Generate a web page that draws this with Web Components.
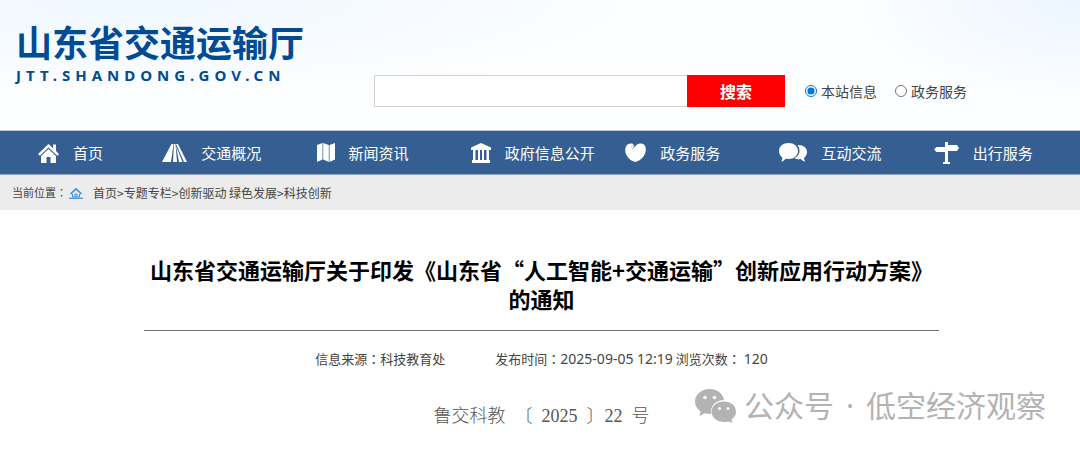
<!DOCTYPE html>
<html lang="zh-CN">
<head>
<meta charset="utf-8">
<title>山东省交通运输厅</title>
<style>
body { margin: 0; background: #fff; color: #444; font-family: "Noto Sans CJK SC", sans-serif; font-size: 14px; }
</style>
</head>
<body>
<site-header>
  <site-logo slot="logo">山东省交通运输厅<span slot="domain">JTT.SHANDONG.GOV.CN</span></site-logo>
  <site-search></site-search>
</site-header>
<site-nav>
  <nav-item icon="home">首页</nav-item>
  <nav-item icon="road">交通概况</nav-item>
  <nav-item icon="map">新闻资讯</nav-item>
  <nav-item icon="hall">政府信息公开</nav-item>
  <nav-item icon="heart">政务服务</nav-item>
  <nav-item icon="chat">互动交流</nav-item>
  <nav-item icon="sign">出行服务</nav-item>
</site-nav>
<crumb-trail></crumb-trail>
<notice-article>
  <span slot="title">山东省交通运输厅关于印发《山东省“人工智能+交通运输”创新应用行动方案》的通知</span>
  <notice-meta slot="meta"></notice-meta>
  <doc-number slot="number">鲁交科教  〔  2025  〕22  号</doc-number>
  <account-mark slot="mark"><span>公众号</span> <span>·</span> <span>低空经济观察</span></account-mark>
</notice-article>

<script>
const define = (name, html) => customElements.define(name, class extends HTMLElement {
  constructor() {
    super();
    this.attachShadow({ mode: 'open' }).innerHTML = html;
  }
});

define('site-header', `
<style>
:host { display: grid; grid-template-columns: 21fr 40fr; align-items: end; padding: 16px 24px 23px 16px;
  background: radial-gradient(ellipse 22% 80% at 100% 0%, #ecf5ff, #f3f9ff00),
    radial-gradient(ellipse 50% 75% at 12% 0%, #eff7ff, #f6faff00), #fdfeff; }
</style>
<slot name="logo"></slot><slot></slot>`);

define('site-logo', `
<style>
:host { display: block; align-self: start; padding-bottom: 23px; color: #004b93; font-weight: 700; }
div { font-size: 36px; line-height: 50px; white-space: nowrap; }
p { margin: 0; font: 700 15px/18px "Noto Sans", sans-serif; letter-spacing: 5px; }
</style>
<div><slot></slot></div><p><slot name="domain"></slot></p>`);

define('site-search', `
<style>
:host { display: block; }
form { display: flex; align-items: center; }
.box { flex: 1; max-width: 313px; min-width: 80px; height: 32px; box-sizing: border-box; border: 1px solid #d0d1d3; border-right: 0; background: #fff; padding: 0 8px; font: inherit; }
button { width: 98px; height: 32px; padding: 0; border: 0; background: #f00; color: #fff; font: 700 16px/32px "Noto Sans CJK SC", sans-serif; }
label { display: flex; align-items: center; gap: 4px; margin-left: 20px; font-size: 14px; line-height: 20px; white-space: nowrap; }
label + label { margin-left: 18px; }
label input { width: 12px; height: 12px; margin: 0; accent-color: #0078d7; }
</style>
<form>
  <input class="box" type="text" aria-label="搜索">
  <button type="button">搜索</button>
  <label><input type="radio" name="scope" checked>本站信息</label>
  <label><input type="radio" name="scope">政务服务</label>
</form>`);

define('site-nav', `
<style>
:host { display: block; background: #355f92; border-top: 1px solid #b5c8dc; border-bottom: 1px solid #8fa6c6; }
nav { display: grid; grid-template-columns: repeat(7, 1fr); }
::slotted(:first-child) { padding-left: 38px; }
</style>
<nav><slot></slot></nav>`);

const icons = {
  home: [21, 20, '<path d="M10.500 1 0 11l1.800 1.700L10.500 4.500l8.700 8.200L21 11l-3-2.900V1.500h-3v3.700z"/><path d="M10.500 6 3 13v7h5.500v-6h4v6H18v-7z"/>'],
  road: [25, 18, '<path d="M9.500 0h2L9 18H0z"/><path d="M12 0h1.500L15 18h-4z"/><path d="M14 0h2l9 18h-3z"/><path d="M14 2l6.500 16H17z"/>'],
  map: [18, 19, '<path d="M0 2 5.500 0v16.500L0 19zM6.200 0 11.800 2v17l-5.600-2.500zM12.500 2l5.500-2v16.500L12.500 19z"/>'],
  hall: [20, 20, '<path d="M10 0 20 4.500V7H0V4.500z"/><path d="M2 7h2.500v10H2zm5 0h2v10H7zm4 0h2v10h-2zm4.500 0H18v10h-2.500zM1 17h18v3H1z"/>'],
  heart: [21, 19, '<path d="M6 5.500C6.500 3 7.500 1.500 9.500 2.500L7 6.500 11.500 2C14 0 17 0 19 1.500c3 3 2 9-1 12.500-2 2.500-5 4.500-7.500 5C7 18.500 4 16 2 13-.5 9-.5 4 2.500 1.500 4.500 0 7.500 0 9 1.500 7 2 6 3.500 6 5.500z"/>'],
  chat: [28, 19, '<path d="M9.500 0C15 0 19 3.500 19 8s-4 8-9.500 8c-1 0-2 0-3-.3C5.500 17 4 18.500 2 18.500c1-1 1.500-2.500 1.300-4C1.300 13 0 10.500 0 8c0-4.500 4-8 9.500-8z"/><path d="M19.500 2c5 0 8.500 3 8.500 7 0 2.500-1.200 4.500-3 5.700 0 1.500.500 2.800 1.500 3.800-2 0-3.500-1-4.500-2.500-2 .5-4.500.3-6.500-.7C19 13.500 20.500 11 20.500 8c0-2-.5-4-2-6z"/>'],
  sign: [25, 22, '<path d="M11 0h3v20h2v2H9v-2h2z"/><path d="M14 3h9l2 3-2 3h-9zM11 5H2.500L0 7.500 2.500 10H11z"/>']
};
customElements.define('nav-item', class extends HTMLElement {
  constructor() {
    super();
    const [w, h, shape] = icons[this.getAttribute('icon')];
    this.attachShadow({ mode: 'open' }).innerHTML = `
<style>
:host { display: block; padding-left: 8px; }
a { display: flex; align-items: center; gap: 14px; height: 43px; color: #fff; font-size: 15px; line-height: 22px; text-decoration: none; white-space: nowrap; }
svg { flex: none; fill: #fff; }
</style>
<a href="#"><svg width="${w}" height="${h}" viewBox="0 0 ${w} ${h}" aria-hidden="true">${shape}</svg><span><slot></slot></span></a>`;
  }
});

define('crumb-trail', `
<style>
:host { display: block; background: #ececec; color: #444; font-size: 12px; line-height: 35px; }
nav { display: flex; align-items: center; padding-left: 12px; white-space: nowrap; }
svg { margin-right: 10px; }
a { color: inherit; text-decoration: none; }
.label { width: 57px; font-size: 11px; }
i { font-style: normal; font-family: "Noto Sans CJK TC", sans-serif; }
</style>
<nav><span class="label">当前位置<i lang="zh-TW">：</i></span>
<svg width="14" height="12" viewBox="0 0 14 12" fill="none" stroke="#3c8fdc" aria-hidden="true"><path d="M1.500 7 7 1.800 12.500 7" stroke-width="1.600"/><path d="M3.500 7v3h7V7M6 10V7h2v3"/><path d="M0 11.300h14" stroke-width="1.200"/></svg>
<div><a href="#">首页</a>&gt;<a href="#">专题专栏</a>&gt;<a href="#">创新驱动 绿色发展</a>&gt;<a href="#">科技创新</a></div></nav>`);

define('notice-article', `
<style>
:host { display: block; position: relative; padding: 45px 141px 20px 144px; }
h1 { margin: 0; padding-bottom: 17px; border-bottom: 1px solid #707070; color: #000; font-size: 22px; line-height: 29px; text-align: center; }
</style>
<article><h1><slot name="title"></slot></h1><slot name="meta"></slot><slot name="number"></slot></article><slot name="mark"></slot>`);

define('notice-meta', `
<style>
:host { display: flex; justify-content: center; gap: 50px; padding-top: 17px; color: #444; font-size: 13px; line-height: 22px; white-space: nowrap; }
b { font: 14px "Noto Sans", sans-serif; }
i { font-style: normal; font-family: "Noto Sans CJK TC", sans-serif; }
</style>
<span>信息来源<i lang="zh-TW">：</i>科技教育处</span><span>发布时间<i lang="zh-TW">：</i><b>2025-09-05 12:19</b> 浏览次数<i lang="zh-TW">：</i> <b>120</b></span>`);

define('doc-number', `
<style>
:host { display: block; padding-top: 32px; color: #555; font: 300 18px/28px "Liberation Serif", "Noto Sans CJK SC", serif; text-align: center; }
p { margin: 0; white-space: pre; }
</style>
<p><slot></slot></p>`);

define('account-mark', `
<style>
:host { position: absolute; right: 34px; top: 174px; display: flex; align-items: center; color: #b3b3b3; font: 30px/44px "Noto Sans", "Noto Sans CJK SC", sans-serif; white-space: nowrap; }
svg { margin-right: 8px; }
div { display: flex; gap: 12px; }
</style>
<svg width="41" height="34" viewBox="0 0 41 34" aria-hidden="true"><path fill="#b3b3b3" d="M14.500 0C6.500 0 0 5.500 0 12.500c0 4 2 7.500 5.500 9.800L4.500 27l5.300-2.800c2 .6 4 .8 6.200.8C15 17 21 11 29 11 28 4.500 22 0 14.500 0z"/><path fill="#b3b3b3" d="M29 12.500c-7 0-12.500 4.600-12.500 10.300S22 33 29 33c1.500 0 3-.2 4.300-.6L37.500 34l-1-3.500c3-2 4.500-4.700 4.500-7.700 0-5.700-5-10.300-12-10.300z"/><g fill="#fff"><circle cx="10" cy="8.500" r="1.800"/><circle cx="19.500" cy="8.500" r="1.800"/><circle cx="24.500" cy="19.500" r="1.500"/><circle cx="33" cy="19.500" r="1.500"/></g></svg>
<div><slot></slot></div>`);
</script>
</body>
</html>
